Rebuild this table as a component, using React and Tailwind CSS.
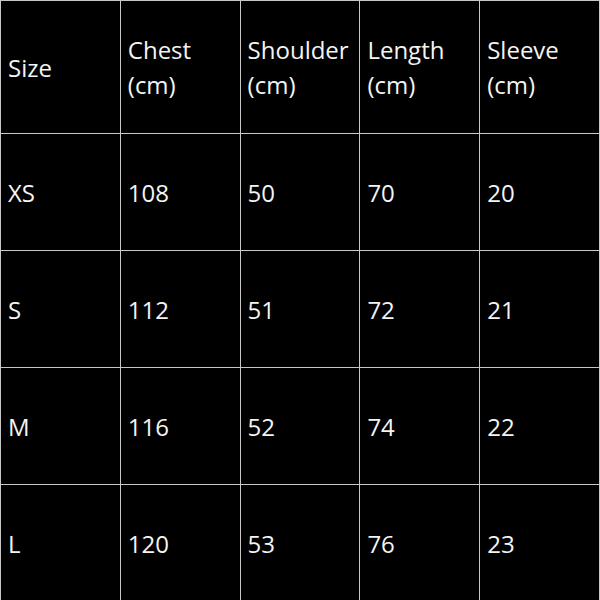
import React from 'react';

const headers = ['Size', 'Chest\n(cm)', 'Shoulder\n(cm)', 'Length\n(cm)', 'Sleeve\n(cm)'];

const rows = [
  ['XS', '108', '50', '70', '20'],
  ['S', '112', '51', '72', '21'],
  ['M', '116', '52', '74', '22'],
  ['L', '120', '53', '76', '23'],
];

const cellClass = 'border border-[#c8c8c8] px-[7px] align-middle text-left font-normal whitespace-pre-line';

export default function App() {
  return (
    <div className="w-[600px] h-[600px] bg-black" style={{ fontFamily: '"Open Sans", sans-serif' }}>
      <table className="w-[600px] h-[600px] border-collapse table-fixed text-[24px] leading-[35px] text-[#f4f4f4]">
        <thead>
          <tr className="h-[133px]">
            {headers.map((h) => (
              <th key={h} className={cellClass}>{h}</th>
            ))}
          </tr>
        </thead>
        <tbody>
          {rows.map((r) => (
            <tr key={r[0]} className="h-[117px]">
              {r.map((v, i) => (
                <td key={i} className={cellClass}>{v}</td>
              ))}
            </tr>
          ))}
        </tbody>
      </table>
    </div>
  );
}
